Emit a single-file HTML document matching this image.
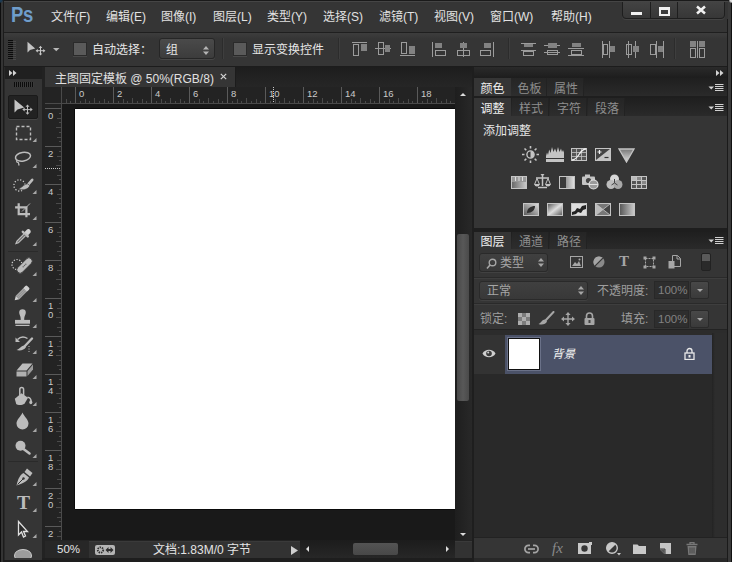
<!DOCTYPE html>
<html lang="zh-CN">
<head>
<meta charset="utf-8">
<title>Photoshop</title>
<style>
html,body{margin:0;padding:0;}
body{width:732px;height:562px;overflow:hidden;background:#353535;position:relative;
 font-family:"Liberation Sans","Noto Sans CJK SC",sans-serif;font-size:12px;color:#dcdcdc;}
.a{position:absolute;}
.t{position:absolute;white-space:nowrap;line-height:1;}
#menubar{left:0;top:0;width:732px;height:32px;background:#353535;}
.mi{position:absolute;top:11px;font-size:12px;color:#e2e2e2;white-space:nowrap;line-height:12px;}
#optbar{left:4px;top:33px;width:724px;height:33px;background:linear-gradient(#3d3d3d 0,#353535 6px);}
#docarea{left:45px;top:67px;width:427px;height:490px;background:#282828;}
#canvasbg{left:62px;top:103px;width:393px;height:437px;background:#191919;}
#canvas{left:75px;top:109px;width:380px;height:400px;background:#ffffff;box-shadow:0 1px 0 #0a0a0a,0 -1px 0 #0a0a0a,-1px 0 0 #0a0a0a;}
#toolbox{left:5px;top:67px;width:37px;height:495px;background:#353535;}
#rpanel{left:474px;top:67px;width:258px;height:495px;background:#282828;}
.cb{width:14px;height:14px;background:#5a5a5a;border:1px solid #2a2a2a;box-sizing:border-box;box-shadow:0 1px 0 #484848;}
.dd{background:linear-gradient(#4a4a4a,#3c3c3c);border:1px solid #262626;border-radius:3px;box-sizing:border-box;box-shadow:0 1px 0 #474747;}
.sep{width:1px;height:21px;background:#2c2c2c;box-shadow:1px 0 0 #3e3e3e;}
.rn{font-size:9.5px;color:#cacaca;}
.tabrow{left:474px;width:253px;height:18px;background:linear-gradient(#1f1f1f,#2a2a2a);}
.tabon{height:18px;overflow:hidden;background:#353535;color:#f0f0f0;font-size:12px;line-height:22px;text-align:center;white-space:nowrap;}
.taboff{height:18px;overflow:hidden;padding-left:2px;background:linear-gradient(#252525,#2d2d2d);color:#8e8e8e;font-size:12px;line-height:22px;text-align:center;white-space:nowrap;border-right:1px solid #222;box-sizing:border-box;}
.fld{width:35px;height:18px;background:#2e2e2e;border:1px solid #282828;box-sizing:border-box;}
.btn{width:19px;height:18px;background:linear-gradient(#484848,#3a3a3a);border:1px solid #2a2a2a;border-radius:2px;box-sizing:border-box;}
.dd2{background:linear-gradient(#404040,#383838);border:1px solid #2a2a2a;border-radius:3px;box-sizing:border-box;box-shadow:0 1px 0 #414141;}
</style>
</head>
<body>
<!-- MENUBAR -->
<div id="menubar" class="a">
 <div class="t" style="left:11px;top:4px;font-size:22px;font-weight:bold;color:#6f9dcb;letter-spacing:-0.5px;transform:scaleX(0.84);transform-origin:0 0;">Ps</div>
 <div class="mi" style="left:51px;">文件(F)</div>
 <div class="mi" style="left:106px;">编辑(E)</div>
 <div class="mi" style="left:161px;">图像(I)</div>
 <div class="mi" style="left:213px;">图层(L)</div>
 <div class="mi" style="left:267px;">类型(Y)</div>
 <div class="mi" style="left:323px;">选择(S)</div>
 <div class="mi" style="left:379px;">滤镜(T)</div>
 <div class="mi" style="left:434px;">视图(V)</div>
 <div class="mi" style="left:490px;">窗口(W)</div>
 <div class="mi" style="left:551px;">帮助(H)</div>
 <!-- window controls -->
 <div class="a" style="left:622px;top:-2px;width:103px;height:21px;background:linear-gradient(#454545,#373737);border:1px solid #1e1e1e;border-radius:0 0 4px 4px;box-sizing:border-box;box-shadow:0 1px 0 #444;"></div>
 <div class="a" style="left:650px;top:0;width:1px;height:19px;background:#1e1e1e;"></div>
 <div class="a" style="left:677px;top:0;width:1px;height:19px;background:#1e1e1e;"></div>
 <div class="a" style="left:631px;top:12px;width:11px;height:3px;background:#f0f0f0;"></div>
 <div class="a" style="left:659px;top:7px;width:11px;height:9px;border:2px solid #f0f0f0;border-top-width:3px;box-sizing:border-box;"></div>
 <svg class="a" style="left:695px;top:5px;" width="12" height="10" viewBox="0 0 12 10"><path d="M2 1.500 L10 8.500 M10 1.500 L2 8.500" stroke="#f2f2f2" stroke-width="2.500" fill="none"/></svg>
</div>
<div class="a" style="left:0;top:32px;width:732px;height:1px;background:#1f1f1f;"></div>
<!-- OPTIONS BAR -->
<div id="optbar" class="a">
 <!-- grip -->
 <div class="a" style="left:4px;top:7px;width:5px;height:20px;background:repeating-linear-gradient(to bottom,#0c0c0c 0 1px,#3a3a3a 1px 2px);"></div><div class="a" style="left:9px;top:7px;width:3px;height:20px;background:repeating-linear-gradient(to bottom,#353535 0 1px,#484848 1px 2px);"></div>
 <!-- move tool icon -->
 <svg class="a" style="left:20px;top:6px;" width="26" height="18" viewBox="20 6 26 18"><path d="M23.500 8.800 L23.500 19.600 L26 17 L31.200 15.600 Z" fill="#c4c4c4"/><path d="M36.500 14 V21.500 M32.800 17.700 H40.200" stroke="#c8c8c8" stroke-width="1" fill="none"/><path d="M36.500 12.800 l-1.800 2.200 h3.600 Z M36.500 22.600 l-1.800 -2.200 h3.600 Z M31.600 17.700 l2.200 -1.800 v3.600 Z M41.400 17.700 l-2.200 -1.800 v3.600 Z" fill="#c8c8c8"/></svg>
 <svg class="a" style="left:49px;top:15px;" width="7" height="4" viewBox="0 0 7 4"><path d="M0 0 H6.500 L3.250 3.300 Z" fill="#b8b8b8"/></svg>
 <div class="a cb" style="left:69px;top:9px;"></div>
 <div class="t" style="left:88px;top:11px;font-size:12px;color:#e6e6e6;">自动选择：</div>
 <div class="a dd" style="left:155px;top:5px;width:56px;height:21px;"></div>
 <div class="t" style="left:162px;top:11px;font-size:12px;color:#e6e6e6;">组</div>
 <svg class="a" style="left:199px;top:12.500px;" width="6" height="9" viewBox="0 0 6 9"><path d="M0 3.500 L3 0 L6 3.500 Z M0 5.500 L3 9 L6 5.500 Z" fill="#b4b4b4"/></svg>
 <div class="a sep" style="left:218px;top:5px;"></div>
 <div class="a cb" style="left:229px;top:9px;"></div>
 <div class="t" style="left:248px;top:11px;font-size:12px;color:#e6e6e6;">显示变换控件</div>
 <div class="a sep" style="left:334px;top:5px;"></div>
<svg class="a" style="left:0;top:0;" width="728" height="31" viewBox="4 33 728 31" shape-rendering="crispEdges"><rect x="352" y="42" width="15" height="1" fill="#9c9c9c"/><rect x="353.5" y="44.5" width="5" height="11" fill="none" stroke="#9c9c9c" stroke-width="1"/><rect x="361" y="44" width="6" height="7" fill="#828282"/><rect x="375" y="48" width="16" height="1" fill="#9c9c9c"/><rect x="378.5" y="42.5" width="5" height="12" fill="none" stroke="#9c9c9c" stroke-width="1"/><rect x="385" y="45" width="5" height="7" fill="#828282"/><rect x="400" y="55" width="15" height="1" fill="#9c9c9c"/><rect x="401.5" y="42.5" width="5" height="11" fill="none" stroke="#9c9c9c" stroke-width="1"/><rect x="409" y="46" width="6" height="8" fill="#828282"/><rect x="432" y="42" width="1" height="15" fill="#9c9c9c"/><rect x="435" y="43" width="7" height="5" fill="#828282"/><rect x="435.5" y="50.5" width="10" height="5" fill="none" stroke="#9c9c9c" stroke-width="1"/><rect x="463" y="42" width="1" height="15" fill="#9c9c9c"/><rect x="460" y="43" width="7" height="5" fill="#828282"/><rect x="457.5" y="50.5" width="12" height="5" fill="none" stroke="#9c9c9c" stroke-width="1"/><rect x="493" y="42" width="1" height="15" fill="#9c9c9c"/><rect x="484" y="43" width="7" height="5" fill="#828282"/><rect x="480.5" y="50.5" width="10" height="5" fill="none" stroke="#9c9c9c" stroke-width="1"/><rect x="521" y="43" width="15" height="1" fill="#9c9c9c"/><rect x="524" y="44" width="9" height="3" fill="#828282"/><rect x="521" y="50" width="15" height="1" fill="#9c9c9c"/><rect x="523.5" y="51.5" width="10" height="4" fill="none" stroke="#9c9c9c" stroke-width="1"/><rect x="544" y="45" width="16" height="1" fill="#9c9c9c"/><rect x="548" y="43" width="9" height="5" fill="#828282"/><rect x="544" y="52" width="16" height="1" fill="#9c9c9c"/><rect x="547.5" y="50.5" width="10" height="4" fill="none" stroke="#9c9c9c" stroke-width="1"/><rect x="572" y="43" width="9" height="4" fill="#828282"/><rect x="568" y="48" width="16" height="1" fill="#9c9c9c"/><rect x="571.5" y="50.5" width="10" height="4" fill="none" stroke="#9c9c9c" stroke-width="1"/><rect x="568" y="55" width="16" height="1" fill="#9c9c9c"/><rect x="602" y="41" width="1" height="17" fill="#9c9c9c"/><rect x="603.5" y="44.5" width="4" height="10" fill="none" stroke="#9c9c9c" stroke-width="1"/><rect x="609" y="41" width="1" height="17" fill="#9c9c9c"/><rect x="610" y="46" width="5" height="6" fill="#828282"/><rect x="628" y="41" width="1" height="17" fill="#9c9c9c"/><rect x="626.5" y="44.5" width="5" height="10" fill="none" stroke="#9c9c9c" stroke-width="1"/><rect x="635" y="41" width="1" height="17" fill="#9c9c9c"/><rect x="633" y="46" width="6" height="6" fill="#828282"/><rect x="650.5" y="44.5" width="5" height="10" fill="none" stroke="#9c9c9c" stroke-width="1"/><rect x="656" y="41" width="1" height="17" fill="#9c9c9c"/><rect x="658" y="46" width="5" height="6" fill="#828282"/><rect x="663" y="41" width="1" height="17" fill="#9c9c9c"/><rect x="690" y="41" width="6" height="6" fill="#828282"/><rect x="690.5" y="48.5" width="5" height="9" fill="none" stroke="#9c9c9c" stroke-width="1"/><rect x="697" y="41" width="1" height="17" fill="#9c9c9c"/><rect x="699" y="41" width="6" height="6" fill="#828282"/><rect x="699.5" y="48.5" width="5" height="9" fill="none" stroke="#9c9c9c" stroke-width="1"/></svg><div class="a sep" style="left:504px;top:5px;"></div><div class="a sep" style="left:670px;top:5px;"></div>
</div>
<div class="a" style="left:0;top:66px;width:732px;height:1px;background:#1c1c1c;"></div>
<!-- TOOLBOX -->
<div class="a" style="left:0;top:67px;width:5px;height:495px;background:#282828;"></div>
<div id="toolbox" class="a"></div>
<div class="a" style="left:5px;top:67px;width:37px;height:12px;background:#202020;"></div>
<svg class="a" style="left:9px;top:70px;" width="8" height="6" viewBox="0 0 8 6"><path d="M0 0 L3.500 3 L0 6 Z M4 0 L7.500 3 L4 6 Z" fill="#d4d4d4"/></svg>
<div class="a" style="left:14px;top:82px;width:20px;height:5px;background:repeating-linear-gradient(to right,#0c0c0c 0 1px,#3a3a3a 1px 2px);"></div>
<div class="a" style="left:8px;top:251px;width:30px;height:1px;background:#2a2a2a;"></div>
<div class="a" style="left:8px;top:461px;width:30px;height:1px;background:#2a2a2a;"></div>
<div class="a" style="left:8px;top:95px;width:30px;height:24px;background:#222;border:1px solid #1a1a1a;border-radius:2px;box-sizing:border-box;box-shadow:0 1px 0 #444;"></div>
<svg class="a" style="left:8px;top:94px;" width="30" height="26" viewBox="0 0 30 26"><path d="M6.500 5.500 V18.600 L9.500 15.500 L16.200 13.500 Z" fill="#c4c4c4"/><path d="M19.500 11.500 V19.700 M15.400 15.600 H23.600" stroke="#bcbcbc" stroke-width="1" fill="none"/><path d="M19.500 10.400 l-2 2.400 h4 Z M19.500 20.800 l-2 -2.400 h4 Z M14.300 15.600 l2.400 -2 v4 Z M24.700 15.600 l-2.400 -2 v4 Z" fill="#bcbcbc"/></svg>
<svg class="a" style="left:8px;top:120px;" width="30" height="26" viewBox="0 0 30 26"><rect x="8.5" y="6.5" width="14" height="13" fill="none" stroke="#bcbcbc" stroke-width="1.4" stroke-dasharray="3 2"/><path d="M28.500 18 V22 H24.500 Z" fill="#a8a8a8"/></svg>
<svg class="a" style="left:8px;top:146px;" width="30" height="26" viewBox="0 0 30 26"><ellipse cx="15" cy="10.700" rx="7.600" ry="4.300" transform="rotate(-10 15 10.700)" fill="none" stroke="#bcbcbc" stroke-width="1.500"/><path d="M9.300 14 c-1.200 1 -0.600 2.400 0.600 2.400 c1 0 0.600 1.600 1.200 3" fill="none" stroke="#bcbcbc" stroke-width="1.300"/><path d="M28.500 18 V22 H24.500 Z" fill="#a8a8a8"/></svg>
<svg class="a" style="left:8px;top:172px;" width="30" height="26" viewBox="0 0 30 26"><circle cx="11.500" cy="13.400" r="5.600" fill="none" stroke="#d0d0d0" stroke-width="1.300" stroke-dasharray="1.200 1.730"/><path d="M24.200 7.800 L19 13.800" stroke="#bcbcbc" stroke-width="2.600" stroke-linecap="round"/><path d="M19.800 11.800 c-3.500 0 -5 3.200 -9.300 5.200 c3.500 1.800 9.500 0.800 11.300 -3.200 Z" fill="#bcbcbc" stroke="#353535" stroke-width="0.600"/><path d="M28.500 18 V22 H24.500 Z" fill="#a8a8a8"/></svg>
<svg class="a" style="left:8px;top:198px;" width="30" height="26" viewBox="0 0 30 26"><path d="M10.700 5.300 V16.100 H22 M7.100 9.400 H18.400 V19.200" fill="none" stroke="#bcbcbc" stroke-width="2.200"/><path d="M22 5.500 L14 13.500" stroke="#bcbcbc" stroke-width="0.900"/><path d="M28.500 18 V22 H24.500 Z" fill="#a8a8a8"/></svg>
<svg class="a" style="left:8px;top:224px;" width="30" height="26" viewBox="0 0 30 26"><path d="M19 5.500 c1.500 -1.800 5 1.200 3.400 3.200 l-2.600 2.800 l-3.400 -3.200 Z" fill="#d0d0d0"/><path d="M14.800 7.800 l5 4.600" stroke="#bcbcbc" stroke-width="2.400" stroke-linecap="round"/><path d="M15.800 10.200 L9 17.200 L8 19.600 L10.400 18.800 L17.400 11.800" fill="#6a6a6a" stroke="#bcbcbc" stroke-width="1.200"/><path d="M28.500 18 V22 H24.500 Z" fill="#a8a8a8"/></svg>
<svg class="a" style="left:8px;top:254px;" width="30" height="26" viewBox="0 0 30 26"><circle cx="9" cy="10.500" r="5" fill="none" stroke="#d0d0d0" stroke-width="1.200" stroke-dasharray="1.200 1.600"/><rect x="7" y="8.200" width="19" height="6.600" rx="3.300" transform="rotate(-45 16.500 11.500)" fill="#bcbcbc" stroke="#353535" stroke-width="0.800"/><circle cx="15.200" cy="12.800" r="0.700" fill="#666"/><circle cx="17.800" cy="10.200" r="0.700" fill="#666"/><circle cx="16.500" cy="11.500" r="0.700" fill="#666"/><path d="M28.500 18 V22 H24.500 Z" fill="#a8a8a8"/></svg>
<svg class="a" style="left:8px;top:280px;" width="30" height="26" viewBox="0 0 30 26"><g transform="rotate(-45 14.500 12.500)"><rect x="7.500" y="10" width="14" height="5" fill="#a4a4a4"/><rect x="18" y="10" width="4.500" height="5" rx="1.200" fill="#d0d0d0"/><path d="M7.500 10 L3.500 12.500 L7.500 15 Z" fill="#d0d0d0"/><path d="M7.500 11.700 h11 M7.500 13.400 h11" stroke="#8a8a8a" stroke-width="0.700"/></g><path d="M28.500 18 V22 H24.500 Z" fill="#a8a8a8"/></svg>
<svg class="a" style="left:8px;top:306px;" width="30" height="26" viewBox="0 0 30 26"><path d="M11.200 6.500 a3.300 3.300 0 0 1 6.600 0 c0 2.200 -1.600 3.200 -1.600 7.400 h-3.400 c0 -4.200 -1.600 -5.200 -1.600 -7.400 Z" fill="#bcbcbc"/><rect x="7" y="13.900" width="15" height="3.800" fill="#bcbcbc"/><rect x="7.500" y="18.800" width="14" height="1.200" fill="#bcbcbc"/><path d="M28.500 18 V22 H24.500 Z" fill="#a8a8a8"/></svg>
<svg class="a" style="left:8px;top:332px;" width="30" height="26" viewBox="0 0 30 26"><path d="M9.500 7.500 c3 -3 7 -3 10 -1" fill="none" stroke="#bcbcbc" stroke-width="1.500"/><path d="M7.500 5.500 v4.500 h4.500 Z" fill="#bcbcbc"/><path d="M24 6.500 L15.500 15.500" stroke="#bcbcbc" stroke-width="2.400" stroke-linecap="round"/><path d="M16.500 13.500 c-3 0 -4.500 3 -8 4.500 c3.500 1.200 8 0 9.500 -3 Z" fill="#bcbcbc"/><path d="M21 14 v6" stroke="#bcbcbc" stroke-width="1" stroke-dasharray="1 1.500"/><path d="M28.500 18 V22 H24.500 Z" fill="#a8a8a8"/></svg>
<svg class="a" style="left:8px;top:357px;" width="30" height="26" viewBox="0 0 30 26"><path d="M14.500 6.500 h10 l-6 7 h-10 Z" fill="#bcbcbc"/><path d="M8.500 14.500 h10 v5 h-10 Z" fill="#b0b0b0"/><path d="M19.500 14 l5.500 -6.500 v5 l-5.500 6.500 Z" fill="#9a9a9a"/><path d="M28.500 18 V22 H24.500 Z" fill="#a8a8a8"/></svg>
<svg class="a" style="left:8px;top:384px;" width="30" height="26" viewBox="0 0 30 26"><path d="M6.800 14.800 L13.500 9.200 L20 13.800 L16.500 19.800 C14 21.500 10 21.500 8.200 20 Z" fill="#bcbcbc"/><path d="M11.800 12.500 V5.500 a1.900 1.900 0 0 1 3.800 0 V13" fill="none" stroke="#bcbcbc" stroke-width="1.500"/><path d="M19.500 13.200 c2.500 0.300 3.600 2 3.600 4.300" fill="none" stroke="#bcbcbc" stroke-width="1.400"/><ellipse cx="22.800" cy="18.200" rx="1.500" ry="2" fill="#bcbcbc"/><path d="M28.500 18 V22 H24.500 Z" fill="#a8a8a8"/></svg>
<svg class="a" style="left:8px;top:410px;" width="30" height="26" viewBox="0 0 30 26"><path d="M14.500 2.500 c1.500 4 6 7 6 11 a6 6 0 0 1 -12 0 c0 -4 4.500 -7 6 -11 Z" fill="#bcbcbc"/><path d="M28.500 18 V22 H24.500 Z" fill="#a8a8a8"/></svg>
<svg class="a" style="left:8px;top:436px;" width="30" height="26" viewBox="0 0 30 26"><circle cx="12.500" cy="9.700" r="5" fill="#bcbcbc"/><path d="M15.500 13 L21.500 17.500" stroke="#bcbcbc" stroke-width="2.600" stroke-linecap="round"/><path d="M28.500 18 V22 H24.500 Z" fill="#a8a8a8"/></svg>
<svg class="a" style="left:8px;top:464px;" width="30" height="26" viewBox="0 0 30 26"><path d="M19 4.500 l5.500 4.500 l-2.500 3.500 l-5.500 -4.500 Z" fill="#bcbcbc"/><path d="M15.500 9 l5.500 4.500 c-1 3 -4 5 -12.500 8 c1.500 -7 3.500 -10.500 7 -12.500 Z" fill="#bcbcbc"/><path d="M9.500 20.500 l5.500 -5.500" stroke="#333" stroke-width="1"/><circle cx="15.500" cy="14.500" r="1.200" fill="#333"/><path d="M28.500 18 V22 H24.500 Z" fill="#a8a8a8"/></svg>
<div class="t" style="left:17px;top:493px;font-family:'Liberation Serif',serif;font-weight:bold;font-size:19.500px;color:#bcbcbc;">T</div>
<svg class="a" style="left:8px;top:490px;" width="30" height="26" viewBox="0 0 30 26"><path d="M28.500 18 V22 H24.500 Z" fill="#a8a8a8"/></svg>
<svg class="a" style="left:8px;top:516px;" width="30" height="26" viewBox="0 0 30 26"><path transform="translate(1 0)" d="M9.500 5.500 V19 L12.500 16 L14.500 21 L16.500 20 L14.500 15.500 H18.500 Z" fill="#2a2a2a" stroke="#e0e0e0" stroke-width="1.300" stroke-linejoin="miter"/><path d="M28.500 18 V22 H24.500 Z" fill="#a8a8a8"/></svg>
<div class="a" style="left:14px;top:549px;width:18px;height:9px;overflow:hidden;"><div class="a" style="left:0;top:0;width:18px;height:13px;border-radius:50%;background:#9c9c9c;border:1px solid #cacaca;box-sizing:border-box;"></div></div><div class="a" style="left:4px;top:560px;width:38px;height:2px;background:#1c1c1c;"></div>
<div class="a" style="left:42px;top:67px;width:3px;height:495px;background:#222;"></div>
<!-- DOC AREA -->
<div id="docarea" class="a"></div>
<div class="a" style="left:45px;top:67px;width:427px;height:20px;background:linear-gradient(#1d1d1d,#262626);"></div><div class="a" style="left:45px;top:67px;width:190px;height:20px;background:#353535;border-right:1px solid #1c1c1c;"></div>
<div class="t" style="left:55px;top:73px;font-size:12px;color:#e0e0e0;">主图固定模板 @ 50%(RGB/8)</div>
<svg class="a" style="left:220px;top:73px;" width="7" height="7" viewBox="0 0 7 7"><path d="M0.800 0.800 L6.200 6.200 M6.200 0.800 L0.800 6.200" stroke="#d4d4d4" stroke-width="1.200" fill="none"/></svg>
<div id="canvasbg" class="a"></div>
<div id="canvas" class="a"></div>
<!-- rulers -->
<div class="a" style="left:45px;top:87px;width:410px;height:16px;background:#232323;"></div>
<div class="a" style="left:45px;top:103px;width:16px;height:437px;background:#232323;"></div>
<div class="a" style="left:45px;top:103px;width:410px;height:1px;background:#4a4a4a;"></div>
<div class="a" style="left:61px;top:87px;width:1px;height:453px;background:#4a4a4a;"></div>
<div class="a" style="left:66px;top:99px;width:1px;height:4px;background:#4a4a4a;"></div>
<div class="a" style="left:70px;top:101px;width:1px;height:2px;background:#4a4a4a;"></div>
<div class="a" style="left:75px;top:87px;width:1px;height:16px;background:#5a5a5a;"></div>
<div class="t rn" style="left:79px;top:89px;">0</div>
<div class="a" style="left:80px;top:101px;width:1px;height:2px;background:#4a4a4a;"></div>
<div class="a" style="left:85px;top:99px;width:1px;height:4px;background:#4a4a4a;"></div>
<div class="a" style="left:89px;top:101px;width:1px;height:2px;background:#4a4a4a;"></div>
<div class="a" style="left:94px;top:98px;width:1px;height:5px;background:#4a4a4a;"></div>
<div class="a" style="left:99px;top:101px;width:1px;height:2px;background:#4a4a4a;"></div>
<div class="a" style="left:104px;top:99px;width:1px;height:4px;background:#4a4a4a;"></div>
<div class="a" style="left:108px;top:101px;width:1px;height:2px;background:#4a4a4a;"></div>
<div class="a" style="left:113px;top:87px;width:1px;height:16px;background:#5a5a5a;"></div>
<div class="t rn" style="left:117px;top:89px;">2</div>
<div class="a" style="left:118px;top:101px;width:1px;height:2px;background:#4a4a4a;"></div>
<div class="a" style="left:123px;top:99px;width:1px;height:4px;background:#4a4a4a;"></div>
<div class="a" style="left:127px;top:101px;width:1px;height:2px;background:#4a4a4a;"></div>
<div class="a" style="left:132px;top:98px;width:1px;height:5px;background:#4a4a4a;"></div>
<div class="a" style="left:137px;top:101px;width:1px;height:2px;background:#4a4a4a;"></div>
<div class="a" style="left:142px;top:99px;width:1px;height:4px;background:#4a4a4a;"></div>
<div class="a" style="left:146px;top:101px;width:1px;height:2px;background:#4a4a4a;"></div>
<div class="a" style="left:151px;top:87px;width:1px;height:16px;background:#5a5a5a;"></div>
<div class="t rn" style="left:155px;top:89px;">4</div>
<div class="a" style="left:156px;top:101px;width:1px;height:2px;background:#4a4a4a;"></div>
<div class="a" style="left:161px;top:99px;width:1px;height:4px;background:#4a4a4a;"></div>
<div class="a" style="left:165px;top:101px;width:1px;height:2px;background:#4a4a4a;"></div>
<div class="a" style="left:170px;top:98px;width:1px;height:5px;background:#4a4a4a;"></div>
<div class="a" style="left:175px;top:101px;width:1px;height:2px;background:#4a4a4a;"></div>
<div class="a" style="left:180px;top:99px;width:1px;height:4px;background:#4a4a4a;"></div>
<div class="a" style="left:184px;top:101px;width:1px;height:2px;background:#4a4a4a;"></div>
<div class="a" style="left:189px;top:87px;width:1px;height:16px;background:#5a5a5a;"></div>
<div class="t rn" style="left:193px;top:89px;">6</div>
<div class="a" style="left:194px;top:101px;width:1px;height:2px;background:#4a4a4a;"></div>
<div class="a" style="left:199px;top:99px;width:1px;height:4px;background:#4a4a4a;"></div>
<div class="a" style="left:203px;top:101px;width:1px;height:2px;background:#4a4a4a;"></div>
<div class="a" style="left:208px;top:98px;width:1px;height:5px;background:#4a4a4a;"></div>
<div class="a" style="left:213px;top:101px;width:1px;height:2px;background:#4a4a4a;"></div>
<div class="a" style="left:218px;top:99px;width:1px;height:4px;background:#4a4a4a;"></div>
<div class="a" style="left:222px;top:101px;width:1px;height:2px;background:#4a4a4a;"></div>
<div class="a" style="left:227px;top:87px;width:1px;height:16px;background:#5a5a5a;"></div>
<div class="t rn" style="left:231px;top:89px;">8</div>
<div class="a" style="left:232px;top:101px;width:1px;height:2px;background:#4a4a4a;"></div>
<div class="a" style="left:237px;top:99px;width:1px;height:4px;background:#4a4a4a;"></div>
<div class="a" style="left:241px;top:101px;width:1px;height:2px;background:#4a4a4a;"></div>
<div class="a" style="left:246px;top:98px;width:1px;height:5px;background:#4a4a4a;"></div>
<div class="a" style="left:251px;top:101px;width:1px;height:2px;background:#4a4a4a;"></div>
<div class="a" style="left:256px;top:99px;width:1px;height:4px;background:#4a4a4a;"></div>
<div class="a" style="left:260px;top:101px;width:1px;height:2px;background:#4a4a4a;"></div>
<div class="a" style="left:265px;top:87px;width:1px;height:16px;background:#5a5a5a;"></div>
<div class="t rn" style="left:269px;top:89px;">10</div>
<div class="a" style="left:270px;top:101px;width:1px;height:2px;background:#4a4a4a;"></div>
<div class="a" style="left:275px;top:99px;width:1px;height:4px;background:#4a4a4a;"></div>
<div class="a" style="left:279px;top:101px;width:1px;height:2px;background:#4a4a4a;"></div>
<div class="a" style="left:284px;top:98px;width:1px;height:5px;background:#4a4a4a;"></div>
<div class="a" style="left:289px;top:101px;width:1px;height:2px;background:#4a4a4a;"></div>
<div class="a" style="left:294px;top:99px;width:1px;height:4px;background:#4a4a4a;"></div>
<div class="a" style="left:298px;top:101px;width:1px;height:2px;background:#4a4a4a;"></div>
<div class="a" style="left:303px;top:87px;width:1px;height:16px;background:#5a5a5a;"></div>
<div class="t rn" style="left:307px;top:89px;">12</div>
<div class="a" style="left:308px;top:101px;width:1px;height:2px;background:#4a4a4a;"></div>
<div class="a" style="left:313px;top:99px;width:1px;height:4px;background:#4a4a4a;"></div>
<div class="a" style="left:317px;top:101px;width:1px;height:2px;background:#4a4a4a;"></div>
<div class="a" style="left:322px;top:98px;width:1px;height:5px;background:#4a4a4a;"></div>
<div class="a" style="left:327px;top:101px;width:1px;height:2px;background:#4a4a4a;"></div>
<div class="a" style="left:332px;top:99px;width:1px;height:4px;background:#4a4a4a;"></div>
<div class="a" style="left:336px;top:101px;width:1px;height:2px;background:#4a4a4a;"></div>
<div class="a" style="left:341px;top:87px;width:1px;height:16px;background:#5a5a5a;"></div>
<div class="t rn" style="left:345px;top:89px;">14</div>
<div class="a" style="left:346px;top:101px;width:1px;height:2px;background:#4a4a4a;"></div>
<div class="a" style="left:351px;top:99px;width:1px;height:4px;background:#4a4a4a;"></div>
<div class="a" style="left:355px;top:101px;width:1px;height:2px;background:#4a4a4a;"></div>
<div class="a" style="left:360px;top:98px;width:1px;height:5px;background:#4a4a4a;"></div>
<div class="a" style="left:365px;top:101px;width:1px;height:2px;background:#4a4a4a;"></div>
<div class="a" style="left:370px;top:99px;width:1px;height:4px;background:#4a4a4a;"></div>
<div class="a" style="left:374px;top:101px;width:1px;height:2px;background:#4a4a4a;"></div>
<div class="a" style="left:379px;top:87px;width:1px;height:16px;background:#5a5a5a;"></div>
<div class="t rn" style="left:383px;top:89px;">16</div>
<div class="a" style="left:384px;top:101px;width:1px;height:2px;background:#4a4a4a;"></div>
<div class="a" style="left:389px;top:99px;width:1px;height:4px;background:#4a4a4a;"></div>
<div class="a" style="left:393px;top:101px;width:1px;height:2px;background:#4a4a4a;"></div>
<div class="a" style="left:398px;top:98px;width:1px;height:5px;background:#4a4a4a;"></div>
<div class="a" style="left:403px;top:101px;width:1px;height:2px;background:#4a4a4a;"></div>
<div class="a" style="left:408px;top:99px;width:1px;height:4px;background:#4a4a4a;"></div>
<div class="a" style="left:412px;top:101px;width:1px;height:2px;background:#4a4a4a;"></div>
<div class="a" style="left:417px;top:87px;width:1px;height:16px;background:#5a5a5a;"></div>
<div class="t rn" style="left:421px;top:89px;">18</div>
<div class="a" style="left:422px;top:101px;width:1px;height:2px;background:#4a4a4a;"></div>
<div class="a" style="left:427px;top:99px;width:1px;height:4px;background:#4a4a4a;"></div>
<div class="a" style="left:431px;top:101px;width:1px;height:2px;background:#4a4a4a;"></div>
<div class="a" style="left:436px;top:98px;width:1px;height:5px;background:#4a4a4a;"></div>
<div class="a" style="left:441px;top:101px;width:1px;height:2px;background:#4a4a4a;"></div>
<div class="a" style="left:446px;top:99px;width:1px;height:4px;background:#4a4a4a;"></div>
<div class="a" style="left:450px;top:101px;width:1px;height:2px;background:#4a4a4a;"></div>
<div class="a" style="left:59px;top:103px;width:2px;height:1px;background:#4a4a4a;"></div>
<div class="a" style="left:45px;top:108px;width:16px;height:1px;background:#5a5a5a;"></div>
<div class="t rn" style="left:48px;top:111px;">0</div>
<div class="a" style="left:59px;top:113px;width:2px;height:1px;background:#4a4a4a;"></div>
<div class="a" style="left:57px;top:118px;width:4px;height:1px;background:#4a4a4a;"></div>
<div class="a" style="left:59px;top:122px;width:2px;height:1px;background:#4a4a4a;"></div>
<div class="a" style="left:56px;top:127px;width:5px;height:1px;background:#4a4a4a;"></div>
<div class="a" style="left:59px;top:132px;width:2px;height:1px;background:#4a4a4a;"></div>
<div class="a" style="left:57px;top:137px;width:4px;height:1px;background:#4a4a4a;"></div>
<div class="a" style="left:59px;top:141px;width:2px;height:1px;background:#4a4a4a;"></div>
<div class="a" style="left:45px;top:146px;width:16px;height:1px;background:#5a5a5a;"></div>
<div class="t rn" style="left:48px;top:149px;">2</div>
<div class="a" style="left:59px;top:151px;width:2px;height:1px;background:#4a4a4a;"></div>
<div class="a" style="left:57px;top:156px;width:4px;height:1px;background:#4a4a4a;"></div>
<div class="a" style="left:59px;top:160px;width:2px;height:1px;background:#4a4a4a;"></div>
<div class="a" style="left:56px;top:165px;width:5px;height:1px;background:#4a4a4a;"></div>
<div class="a" style="left:59px;top:170px;width:2px;height:1px;background:#4a4a4a;"></div>
<div class="a" style="left:57px;top:175px;width:4px;height:1px;background:#4a4a4a;"></div>
<div class="a" style="left:59px;top:179px;width:2px;height:1px;background:#4a4a4a;"></div>
<div class="a" style="left:45px;top:184px;width:16px;height:1px;background:#5a5a5a;"></div>
<div class="t rn" style="left:48px;top:187px;">4</div>
<div class="a" style="left:59px;top:189px;width:2px;height:1px;background:#4a4a4a;"></div>
<div class="a" style="left:57px;top:194px;width:4px;height:1px;background:#4a4a4a;"></div>
<div class="a" style="left:59px;top:198px;width:2px;height:1px;background:#4a4a4a;"></div>
<div class="a" style="left:56px;top:203px;width:5px;height:1px;background:#4a4a4a;"></div>
<div class="a" style="left:59px;top:208px;width:2px;height:1px;background:#4a4a4a;"></div>
<div class="a" style="left:57px;top:213px;width:4px;height:1px;background:#4a4a4a;"></div>
<div class="a" style="left:59px;top:217px;width:2px;height:1px;background:#4a4a4a;"></div>
<div class="a" style="left:45px;top:222px;width:16px;height:1px;background:#5a5a5a;"></div>
<div class="t rn" style="left:48px;top:225px;">6</div>
<div class="a" style="left:59px;top:227px;width:2px;height:1px;background:#4a4a4a;"></div>
<div class="a" style="left:57px;top:232px;width:4px;height:1px;background:#4a4a4a;"></div>
<div class="a" style="left:59px;top:236px;width:2px;height:1px;background:#4a4a4a;"></div>
<div class="a" style="left:56px;top:241px;width:5px;height:1px;background:#4a4a4a;"></div>
<div class="a" style="left:59px;top:246px;width:2px;height:1px;background:#4a4a4a;"></div>
<div class="a" style="left:57px;top:251px;width:4px;height:1px;background:#4a4a4a;"></div>
<div class="a" style="left:59px;top:255px;width:2px;height:1px;background:#4a4a4a;"></div>
<div class="a" style="left:45px;top:260px;width:16px;height:1px;background:#5a5a5a;"></div>
<div class="t rn" style="left:48px;top:263px;">8</div>
<div class="a" style="left:59px;top:265px;width:2px;height:1px;background:#4a4a4a;"></div>
<div class="a" style="left:57px;top:270px;width:4px;height:1px;background:#4a4a4a;"></div>
<div class="a" style="left:59px;top:274px;width:2px;height:1px;background:#4a4a4a;"></div>
<div class="a" style="left:56px;top:279px;width:5px;height:1px;background:#4a4a4a;"></div>
<div class="a" style="left:59px;top:284px;width:2px;height:1px;background:#4a4a4a;"></div>
<div class="a" style="left:57px;top:289px;width:4px;height:1px;background:#4a4a4a;"></div>
<div class="a" style="left:59px;top:293px;width:2px;height:1px;background:#4a4a4a;"></div>
<div class="a" style="left:45px;top:298px;width:16px;height:1px;background:#5a5a5a;"></div>
<div class="t rn" style="left:48px;top:301px;">1</div>
<div class="t rn" style="left:48px;top:310px;">0</div>
<div class="a" style="left:59px;top:303px;width:2px;height:1px;background:#4a4a4a;"></div>
<div class="a" style="left:57px;top:308px;width:4px;height:1px;background:#4a4a4a;"></div>
<div class="a" style="left:59px;top:312px;width:2px;height:1px;background:#4a4a4a;"></div>
<div class="a" style="left:56px;top:317px;width:5px;height:1px;background:#4a4a4a;"></div>
<div class="a" style="left:59px;top:322px;width:2px;height:1px;background:#4a4a4a;"></div>
<div class="a" style="left:57px;top:327px;width:4px;height:1px;background:#4a4a4a;"></div>
<div class="a" style="left:59px;top:331px;width:2px;height:1px;background:#4a4a4a;"></div>
<div class="a" style="left:45px;top:336px;width:16px;height:1px;background:#5a5a5a;"></div>
<div class="t rn" style="left:48px;top:339px;">1</div>
<div class="t rn" style="left:48px;top:348px;">2</div>
<div class="a" style="left:59px;top:341px;width:2px;height:1px;background:#4a4a4a;"></div>
<div class="a" style="left:57px;top:346px;width:4px;height:1px;background:#4a4a4a;"></div>
<div class="a" style="left:59px;top:350px;width:2px;height:1px;background:#4a4a4a;"></div>
<div class="a" style="left:56px;top:355px;width:5px;height:1px;background:#4a4a4a;"></div>
<div class="a" style="left:59px;top:360px;width:2px;height:1px;background:#4a4a4a;"></div>
<div class="a" style="left:57px;top:365px;width:4px;height:1px;background:#4a4a4a;"></div>
<div class="a" style="left:59px;top:369px;width:2px;height:1px;background:#4a4a4a;"></div>
<div class="a" style="left:45px;top:374px;width:16px;height:1px;background:#5a5a5a;"></div>
<div class="t rn" style="left:48px;top:377px;">1</div>
<div class="t rn" style="left:48px;top:386px;">4</div>
<div class="a" style="left:59px;top:379px;width:2px;height:1px;background:#4a4a4a;"></div>
<div class="a" style="left:57px;top:384px;width:4px;height:1px;background:#4a4a4a;"></div>
<div class="a" style="left:59px;top:388px;width:2px;height:1px;background:#4a4a4a;"></div>
<div class="a" style="left:56px;top:393px;width:5px;height:1px;background:#4a4a4a;"></div>
<div class="a" style="left:59px;top:398px;width:2px;height:1px;background:#4a4a4a;"></div>
<div class="a" style="left:57px;top:403px;width:4px;height:1px;background:#4a4a4a;"></div>
<div class="a" style="left:59px;top:407px;width:2px;height:1px;background:#4a4a4a;"></div>
<div class="a" style="left:45px;top:412px;width:16px;height:1px;background:#5a5a5a;"></div>
<div class="t rn" style="left:48px;top:415px;">1</div>
<div class="t rn" style="left:48px;top:424px;">6</div>
<div class="a" style="left:59px;top:417px;width:2px;height:1px;background:#4a4a4a;"></div>
<div class="a" style="left:57px;top:422px;width:4px;height:1px;background:#4a4a4a;"></div>
<div class="a" style="left:59px;top:426px;width:2px;height:1px;background:#4a4a4a;"></div>
<div class="a" style="left:56px;top:431px;width:5px;height:1px;background:#4a4a4a;"></div>
<div class="a" style="left:59px;top:436px;width:2px;height:1px;background:#4a4a4a;"></div>
<div class="a" style="left:57px;top:441px;width:4px;height:1px;background:#4a4a4a;"></div>
<div class="a" style="left:59px;top:445px;width:2px;height:1px;background:#4a4a4a;"></div>
<div class="a" style="left:45px;top:450px;width:16px;height:1px;background:#5a5a5a;"></div>
<div class="t rn" style="left:48px;top:453px;">1</div>
<div class="t rn" style="left:48px;top:462px;">8</div>
<div class="a" style="left:59px;top:455px;width:2px;height:1px;background:#4a4a4a;"></div>
<div class="a" style="left:57px;top:460px;width:4px;height:1px;background:#4a4a4a;"></div>
<div class="a" style="left:59px;top:464px;width:2px;height:1px;background:#4a4a4a;"></div>
<div class="a" style="left:56px;top:469px;width:5px;height:1px;background:#4a4a4a;"></div>
<div class="a" style="left:59px;top:474px;width:2px;height:1px;background:#4a4a4a;"></div>
<div class="a" style="left:57px;top:479px;width:4px;height:1px;background:#4a4a4a;"></div>
<div class="a" style="left:59px;top:483px;width:2px;height:1px;background:#4a4a4a;"></div>
<div class="a" style="left:45px;top:488px;width:16px;height:1px;background:#5a5a5a;"></div>
<div class="t rn" style="left:48px;top:491px;">2</div>
<div class="t rn" style="left:48px;top:500px;">0</div>
<div class="a" style="left:59px;top:493px;width:2px;height:1px;background:#4a4a4a;"></div>
<div class="a" style="left:57px;top:498px;width:4px;height:1px;background:#4a4a4a;"></div>
<div class="a" style="left:59px;top:502px;width:2px;height:1px;background:#4a4a4a;"></div>
<div class="a" style="left:56px;top:507px;width:5px;height:1px;background:#4a4a4a;"></div>
<div class="a" style="left:59px;top:512px;width:2px;height:1px;background:#4a4a4a;"></div>
<div class="a" style="left:57px;top:517px;width:4px;height:1px;background:#4a4a4a;"></div>
<div class="a" style="left:59px;top:521px;width:2px;height:1px;background:#4a4a4a;"></div>
<div class="a" style="left:45px;top:526px;width:16px;height:1px;background:#5a5a5a;"></div>
<div class="t rn" style="left:48px;top:529px;">2</div>
<div class="t rn" style="left:48px;top:538px;">2</div>
<div class="a" style="left:59px;top:531px;width:2px;height:1px;background:#4a4a4a;"></div>
<div class="a" style="left:57px;top:536px;width:4px;height:1px;background:#4a4a4a;"></div>
<div class="a" style="left:45px;top:87px;width:16px;height:16px;background:#232323;"></div>
<div class="a" style="left:273px;top:87px;width:1px;height:16px;background:repeating-linear-gradient(to bottom,#c8c8c8 0 1px,transparent 1px 2px);"></div>
<div class="a" style="left:45px;top:168px;width:16px;height:1px;background:repeating-linear-gradient(to right,#c8c8c8 0 1px,transparent 1px 2px);"></div>
<!-- v scrollbar -->
<div class="a" style="left:455px;top:87px;width:17px;height:453px;background:linear-gradient(to right,#1e1e1e,#282828);"></div>
<div class="a" style="left:457px;top:234px;width:12px;height:167px;background:linear-gradient(to right,#484848,#585858 50%,#4a4a4a);border-radius:2px;"></div>
<svg class="a" style="left:460px;top:93px;" width="6" height="3" viewBox="0 0 6 3"><path d="M0 3 L3 0 L6 3 Z" fill="#dcdcdc"/></svg>
<svg class="a" style="left:460px;top:533px;" width="6" height="3" viewBox="0 0 6 3"><path d="M0 0 L3 3 L6 0 Z" fill="#dcdcdc"/></svg>
<!-- status bar -->
<div class="a" style="left:45px;top:540px;width:427px;height:18px;background:#323232;border-top:1px solid #232323;box-shadow:inset 0 1px 0 #3a3a3a;box-sizing:border-box;"></div>
<div class="a" style="left:45px;top:541px;width:44px;height:17px;background:#272727;"></div>
<div class="t" style="left:57px;top:544px;font-size:11.5px;color:#e4e4e4;">50%</div>
<div class="a" style="left:95px;top:545px;width:20px;height:10px;background:#b4b4b4;border-radius:2px;"></div><svg class="a" style="left:95px;top:545px;" width="20" height="10" viewBox="0 0 20 10"><circle cx="5.500" cy="5" r="2.700" fill="none" stroke="#2e2e2e" stroke-width="1.800" stroke-dasharray="1.400 0.900"/><path d="M10.500 5 l3 -3 v2 h2 v-2 l3 3 l-3 3 v-2 h-2 v2 Z" fill="#2e2e2e"/></svg>
<div class="t" style="left:153px;top:544px;font-size:12px;color:#e4e4e4;">文档:1.83M/0 字节</div>
<svg class="a" style="left:291px;top:546px;" width="7" height="9" viewBox="0 0 7 9"><path d="M0 0 L7 4.5 L0 9 Z" fill="#cfcfcf"/></svg>
<!-- h scrollbar -->
<div class="a" style="left:300px;top:540px;width:155px;height:18px;background:linear-gradient(#1c1c1c,#272727);"></div>
<div class="a" style="left:353px;top:543px;width:45px;height:12px;background:linear-gradient(#545454,#484848);border-radius:2px;"></div>
<svg class="a" style="left:306px;top:546px;" width="3" height="6" viewBox="0 0 3 6"><path d="M3 0 L0 3 L3 6 Z" fill="#dcdcdc"/></svg>
<svg class="a" style="left:446px;top:546px;" width="3" height="6" viewBox="0 0 3 6"><path d="M0 0 L3 3 L0 6 Z" fill="#dcdcdc"/></svg>
<div class="a" style="left:42px;top:558px;width:686px;height:4px;background:#1e1e1e;"></div>
<!-- RIGHT PANELS -->
<div class="a" style="left:472px;top:67px;width:2px;height:495px;background:#1e1e1e;"></div>
<div id="rpanel" class="a"></div>
<div class="a" style="left:474px;top:67px;width:253px;height:11px;background:linear-gradient(#2a2a2a,#1d1d1d);"></div>
<svg class="a" style="left:716px;top:70px;" width="8" height="6" viewBox="0 0 8 6"><path d="M0 0 L3.500 3 L0 6 Z M4 0 L7.500 3 L4 6 Z" fill="#d4d4d4"/></svg>
<!-- tab row 1 -->
<div class="a tabrow" style="top:78px;"></div>
<div class="a tabon" style="left:474px;top:78px;width:37px;">颜色</div>
<div class="a taboff" style="left:511px;top:78px;width:36px;">色板</div>
<div class="a taboff" style="left:547px;top:78px;width:37px;">属性</div>
<svg class="a" style="left:708px;top:84px;" width="16" height="8" viewBox="0 0 16 8"><path d="M0.500 2.500 h5.500 l-2.750 3 Z" fill="#d0d0d0"/><path d="M7 0.500 h8.500 M7 2.500 h8.500 M7 4.500 h8.500 M7 6.500 h8.500" stroke="#d0d0d0" stroke-width="1"/></svg>
<div class="a" style="left:474px;top:96px;width:253px;height:2px;background:#1e1e1e;"></div>
<!-- tab row 2 -->
<div class="a tabrow" style="top:98px;"></div>
<div class="a tabon" style="left:474px;top:98px;width:37px;">调整</div>
<div class="a taboff" style="left:512px;top:98px;width:37px;">样式</div>
<div class="a taboff" style="left:550px;top:98px;width:37px;">字符</div>
<div class="a taboff" style="left:588px;top:98px;width:37px;">段落</div>
<svg class="a" style="left:708px;top:104px;" width="16" height="8" viewBox="0 0 16 8"><path d="M0.500 2.500 h5.500 l-2.750 3 Z" fill="#d0d0d0"/><path d="M7 0.500 h8.500 M7 2.500 h8.500 M7 4.500 h8.500 M7 6.500 h8.500" stroke="#d0d0d0" stroke-width="1"/></svg>
<div class="a" style="left:474px;top:116px;width:253px;height:112px;background:#353535;"></div>
<div class="t" style="left:483px;top:125px;font-size:12px;color:#e6e6e6;">添加调整</div>
<svg class="a" style="left:522px;top:146px;" width="17" height="17" viewBox="0 0 17 17"><circle cx="8.500" cy="8.500" r="3.600" fill="none" stroke="#c4c4c4" stroke-width="1.400"/><path d="M8.500 5 a3.500 3.500 0 0 1 0 7 Z" fill="#c4c4c4"/><path d="M8.500 0 v2.500 M8.500 14.500 v2.500 M0 8.500 h2.500 M14.500 8.500 h2.500 M2.500 2.500 l1.800 1.800 M12.700 12.700 l1.800 1.800 M14.500 2.500 l-1.800 1.800 M4.300 12.700 l-1.800 1.800" stroke="#c4c4c4" stroke-width="1.600"/></svg>
<svg class="a" style="left:546px;top:147px;" width="18" height="15" viewBox="0 0 18 15"><path d="M0 15 V9 l1 -3.500 l1 2.500 l1.200 -5.500 l1.300 3.500 l1.500 -6 l1.500 5 l1.500 -3.500 l1.500 4 l1.500 -5.500 l1.500 5 l1.500 -3.500 l1 3.500 l1 -2 l1 2.500 V15 Z" fill="#c4c4c4"/><path d="M0 11.500 H18" stroke="#353535" stroke-width="1"/></svg>
<svg class="a" style="left:571px;top:148px;" width="16" height="13" viewBox="0 0 16 13"><rect x="0.500" y="0.500" width="15" height="12" fill="#555" stroke="#c4c4c4"/><path d="M0 4.500 H16 M0 8.500 H16 M5.500 0 V13 M10.500 0 V13" stroke="#c4c4c4" stroke-width="0.800"/><path d="M1 12 C8 12 8 1 15 1" fill="none" stroke="#f0f0f0" stroke-width="1.300"/></svg>
<svg class="a" style="left:595px;top:148px;" width="16" height="13" viewBox="0 0 16 13"><rect x="0.500" y="0.500" width="15" height="12" fill="#444" stroke="#c4c4c4"/><path d="M1 12 L15 1 V12 Z" fill="#c4c4c4"/><path d="M2.500 4 h4 M4.500 2 v4" stroke="#eee" stroke-width="1.200"/><path d="M9.500 9.500 h4" stroke="#333" stroke-width="1.200"/></svg>
<svg class="a" style="left:618px;top:148px;" width="17" height="15" viewBox="0 0 17 15"><defs><linearGradient id="gv" x1="0" y1="0" x2="0" y2="1"><stop offset="0" stop-color="#777"/><stop offset="1" stop-color="#ddd"/></linearGradient></defs><path d="M1 1 H16 L8.500 14 Z" fill="url(#gv)" stroke="#c4c4c4" stroke-width="1.300"/></svg>
<svg class="a" style="left:511px;top:176px;" width="16" height="13" viewBox="0 0 16 13"><defs><linearGradient id="g1" x1="0" y1="0" x2="1" y2="0"><stop offset="0" stop-color="#666"/><stop offset="1" stop-color="#ccc"/></linearGradient></defs><rect x="0.500" y="0.500" width="15" height="12" fill="url(#g1)" stroke="#c4c4c4"/><rect x="1" y="1" width="14" height="5" fill="#999"/><path d="M4.500 1 v4 M8 1 v4 M11.500 1 v4" stroke="#ddd" stroke-width="1"/></svg>
<svg class="a" style="left:534px;top:174px;" width="17" height="15" viewBox="0 0 17 15"><path d="M8.500 1 V12 M2 4 H15 M4 13.500 H13" stroke="#c4c4c4" stroke-width="1.500"/><path d="M0.500 10.500 L3 4.500 L5.500 10.500 Z M11.500 10.500 L14 4.500 L16.500 10.500 Z" fill="none" stroke="#c4c4c4" stroke-width="1"/><path d="M0.500 10.500 h5 a2.500 2 0 0 1 -5 0 Z M11.500 10.500 h5 a2.500 2 0 0 1 -5 0 Z" fill="#c4c4c4"/><path d="M6.500 0 h4 l-2 2.500 Z" fill="#c4c4c4"/></svg>
<svg class="a" style="left:559px;top:176px;" width="16" height="13" viewBox="0 0 16 13"><defs><linearGradient id="g2" x1="0" y1="0" x2="1" y2="0"><stop offset="0" stop-color="#999"/><stop offset="1" stop-color="#e0e0e0"/></linearGradient></defs><rect x="0.500" y="0.500" width="15" height="12" fill="#3a3a3a" stroke="#c4c4c4"/><rect x="7" y="1" width="8" height="11" fill="url(#g2)"/></svg>
<svg class="a" style="left:582px;top:174px;" width="17" height="16" viewBox="0 0 17 16"><rect x="0" y="2.500" width="13" height="8.500" rx="1" fill="#c4c4c4"/><rect x="3" y="0.500" width="5" height="3" fill="#c4c4c4"/><circle cx="6.500" cy="6.500" r="2.600" fill="#444"/><circle cx="11.500" cy="10.500" r="4.500" fill="#9a9a9a" stroke="#e0e0e0" stroke-width="1.200"/><path d="M7 10.500 h9" stroke="#e0e0e0" stroke-width="1"/></svg>
<svg class="a" style="left:606px;top:174px;" width="17" height="16" viewBox="0 0 17 16"><circle cx="8.500" cy="5" r="4.500" fill="#d8d8d8"/><circle cx="5" cy="10.500" r="4.500" fill="#bdbdbd"/><circle cx="12" cy="10.500" r="4.500" fill="#a8a8a8"/><path d="M8.500 5 V9 M8.500 9 L5.500 11 M8.500 9 L11.500 11" stroke="#444" stroke-width="1"/></svg>
<svg class="a" style="left:631px;top:176px;" width="16" height="13" viewBox="0 0 16 13"><rect x="0.500" y="0.500" width="15" height="12" fill="#555" stroke="#c4c4c4"/><path d="M0 4.500 H16 M0 8.500 H16 M5.500 0 V13 M10.500 0 V13" stroke="#c4c4c4" stroke-width="1.100"/><rect x="1" y="1" width="4" height="3" fill="#bbb"/><rect x="6" y="1" width="4" height="3" fill="#888"/><rect x="11" y="5" width="4" height="3" fill="#888"/></svg>
<svg class="a" style="left:523px;top:203px;" width="16" height="13" viewBox="0 0 16 13"><defs><linearGradient id="g3" x1="0" y1="1" x2="1" y2="0"><stop offset="0" stop-color="#555"/><stop offset="1" stop-color="#ddd"/></linearGradient></defs><rect x="0.500" y="0.500" width="15" height="12" fill="url(#g3)" stroke="#c4c4c4"/><path d="M4 10 C4 5 8 3 12 3 C12 7 9 10 4 10 Z" fill="#2e2e2e"/></svg>
<svg class="a" style="left:547px;top:203px;" width="16" height="13" viewBox="0 0 16 13"><defs><linearGradient id="g4" x1="0" y1="0" x2="1" y2="1"><stop offset="0" stop-color="#555"/><stop offset="0.500" stop-color="#ddd"/><stop offset="1" stop-color="#555"/></linearGradient></defs><rect x="0.500" y="0.500" width="15" height="12" fill="url(#g4)" stroke="#c4c4c4"/></svg>
<svg class="a" style="left:571px;top:203px;" width="16" height="13" viewBox="0 0 16 13"><rect x="0.500" y="0.500" width="15" height="12" fill="#ddd" stroke="#c4c4c4"/><path d="M1 9 l3 -1 l2 -3 l3 1 l2 -3 l4 -1 v4 l-3 1 l-2 3 l-3 -1 l-2 2 l-4 1 Z" fill="#222"/></svg>
<svg class="a" style="left:595px;top:203px;" width="16" height="13" viewBox="0 0 16 13"><rect x="0.500" y="0.500" width="15" height="12" fill="#777" stroke="#c4c4c4"/><path d="M1 1 L8 6.500 L1 12 Z" fill="#bbb"/><path d="M15 1 L8 6.500 L15 12 Z" fill="#444"/><path d="M1 1 L15 12 M15 1 L1 12" stroke="#c4c4c4" stroke-width="0.800"/></svg>
<svg class="a" style="left:619px;top:203px;" width="16" height="13" viewBox="0 0 16 13"><defs><linearGradient id="g5" x1="0" y1="0" x2="1" y2="0"><stop offset="0" stop-color="#555"/><stop offset="1" stop-color="#ccc"/></linearGradient></defs><rect x="0.500" y="0.500" width="15" height="12" fill="url(#g5)" stroke="#c4c4c4"/></svg>
<div class="a" style="left:474px;top:228px;width:253px;height:4px;background:#1e1e1e;"></div>
<!-- layers -->
<div class="a tabrow" style="top:232px;height:17px;"></div>
<div class="a tabon" style="left:474px;top:232px;width:37px;height:17px;line-height:20px;">图层</div>
<div class="a taboff" style="left:512px;top:232px;width:37px;height:17px;line-height:20px;">通道</div>
<div class="a taboff" style="left:550px;top:232px;width:37px;height:17px;line-height:20px;">路径</div>
<svg class="a" style="left:708px;top:237px;" width="16" height="8" viewBox="0 0 16 8"><path d="M0.500 2.500 h5.500 l-2.750 3 Z" fill="#d0d0d0"/><path d="M7 0.500 h8.500 M7 2.500 h8.500 M7 4.500 h8.500 M7 6.500 h8.500" stroke="#d0d0d0" stroke-width="1"/></svg>
<div class="a" style="left:474px;top:249px;width:253px;height:84px;background:#353535;"></div>
<!-- filter row -->
<div class="a dd2" style="left:479px;top:253px;width:69px;height:19px;"></div>
<svg class="a" style="left:486px;top:258px;" width="11" height="12" viewBox="0 0 11 12"><circle cx="6.500" cy="4.500" r="3.300" fill="none" stroke="#a6a6a6" stroke-width="1.400"/><path d="M4 7 L1 10.500" stroke="#a6a6a6" stroke-width="1.600"/></svg>
<div class="t" style="left:500px;top:257px;font-size:12px;color:#a6a6a6;">类型</div>
<svg class="a" style="left:538px;top:258px;" width="6" height="9" viewBox="0 0 6 9"><path d="M0 3.500 L3 0 L6 3.500 Z M0 5.500 L3 9 L6 5.500 Z" fill="#a6a6a6"/></svg>
<svg class="a" style="left:570px;top:256px;" width="13" height="12" viewBox="0 0 13 12"><rect x="0.500" y="0.500" width="12" height="11" fill="none" stroke="#a6a6a6"/><path d="M2 10 l3 -4 l2 2 l2 -3 l2 5 Z" fill="#a6a6a6"/><circle cx="9.500" cy="3.500" r="1" fill="#a6a6a6"/></svg>
<svg class="a" style="left:593px;top:256px;" width="12" height="12" viewBox="0 0 12 12"><circle cx="6" cy="6" r="5.500" fill="#8a8a8a"/><path d="M6 0.500 a5.500 5.500 0 0 0 -3.900 9.400 L9.900 2.100 A5.500 5.500 0 0 0 6 0.500 Z" fill="#a6a6a6"/><path d="M2.100 9.900 L9.900 2.100" stroke="#353535" stroke-width="1.200"/></svg>
<div class="t" style="left:619px;top:254px;font-family:'Liberation Serif',serif;font-size:15px;font-weight:bold;color:#a6a6a6;">T</div>
<svg class="a" style="left:643px;top:256px;" width="13" height="13" viewBox="0 0 13 13"><rect x="2.500" y="2.500" width="8" height="8" fill="none" stroke="#a6a6a6" stroke-dasharray="2 1"/><rect x="0.500" y="0.500" width="3" height="3" fill="#a6a6a6"/><rect x="9.500" y="0.500" width="3" height="3" fill="#a6a6a6"/><rect x="0.500" y="9.500" width="3" height="3" fill="#a6a6a6"/><rect x="9.500" y="9.500" width="3" height="3" fill="#a6a6a6"/></svg>
<svg class="a" style="left:668px;top:255px;" width="13" height="14" viewBox="0 0 13 14"><path d="M4.500 0.500 h5 l3 3 v8 h-8 Z" fill="none" stroke="#a6a6a6"/><rect x="0.500" y="6" width="6" height="7.500" fill="#a6a6a6"/><path d="M9 0.500 v3.500 h3.500" fill="none" stroke="#a6a6a6"/></svg>
<div class="a" style="left:701px;top:253px;width:10px;height:18px;background:linear-gradient(#5a5a5a 0 45%,#2a2a2a 45%);border:1px solid #222;border-radius:2px;box-sizing:border-box;"></div>
<div class="a" style="left:474px;top:277px;width:253px;height:1px;background:#2a2a2a;"></div>
<div class="a" style="left:474px;top:278px;width:253px;height:1px;background:#3e3e3e;"></div>
<!-- blend row -->
<div class="a dd2" style="left:479px;top:281px;width:109px;height:19px;"></div>
<div class="t" style="left:487px;top:285px;font-size:12px;color:#a6a6a6;">正常</div>
<svg class="a" style="left:578px;top:286px;" width="6" height="9" viewBox="0 0 6 9"><path d="M0 3.500 L3 0 L6 3.500 Z M0 5.500 L3 9 L6 5.500 Z" fill="#a6a6a6"/></svg>
<div class="t" style="left:597px;top:285px;font-size:12px;color:#9e9e9e;">不透明度:</div>
<div class="a fld" style="left:654px;top:281px;"></div>
<div class="t" style="left:658px;top:285px;font-size:11.500px;color:#828282;">100%</div>
<div class="a btn" style="left:690px;top:281px;"></div>
<svg class="a" style="left:697px;top:289px;" width="6" height="3" viewBox="0 0 6 3"><path d="M0 0 H6 L3 3 Z" fill="#a8a8a8"/></svg>
<div class="a" style="left:474px;top:303px;width:253px;height:1px;background:#2a2a2a;"></div>
<div class="a" style="left:474px;top:304px;width:253px;height:1px;background:#3e3e3e;"></div>
<!-- lock row -->
<div class="t" style="left:480px;top:313px;font-size:12px;color:#9e9e9e;">锁定:</div>
<svg class="a" style="left:518px;top:313px;" width="12" height="12" viewBox="0 0 12 12"><rect width="12" height="12" fill="#7c7c7c"/><rect x="0" y="0" width="4" height="4" fill="#aeaeae"/><rect x="8" y="0" width="4" height="4" fill="#aeaeae"/><rect x="4" y="4" width="4" height="4" fill="#aeaeae"/><rect x="0" y="8" width="4" height="4" fill="#aeaeae"/><rect x="8" y="8" width="4" height="4" fill="#aeaeae"/></svg>
<svg class="a" style="left:538px;top:311px;" width="17" height="15" viewBox="0 0 17 15"><path d="M15.500 1 L7.500 9.500" stroke="#a6a6a6" stroke-width="2" stroke-linecap="round"/><path d="M7 8.500 c-3 0 -3.500 3 -6.500 4.500 c3 1.200 7.500 0.500 8.500 -2.500 Z" fill="#a6a6a6"/></svg>
<svg class="a" style="left:561px;top:312px;" width="14" height="14" viewBox="0 0 14 14"><path d="M7 2 V12 M2 7 H12" stroke="#a6a6a6" stroke-width="1.400"/><path d="M7 0 l-2.600 3 h5.200 Z M7 14 l-2.600 -3 h5.200 Z M0 7 l3 -2.600 v5.200 Z M14 7 l-3 -2.600 v5.200 Z" fill="#a6a6a6"/></svg>
<svg class="a" style="left:584px;top:312px;" width="11" height="13" viewBox="0 0 11 13"><path d="M2.500 6 V4 a3 3 0 0 1 6 0 V6" fill="none" stroke="#a6a6a6" stroke-width="1.600"/><rect x="0.500" y="6" width="10" height="7" rx="1" fill="#a6a6a6"/><rect x="4.500" y="8" width="2" height="3" fill="#444"/></svg>
<div class="t" style="left:621px;top:313px;font-size:12px;color:#9e9e9e;">填充:</div>
<div class="a fld" style="left:654px;top:310px;"></div>
<div class="t" style="left:658px;top:314px;font-size:11.500px;color:#828282;">100%</div>
<div class="a btn" style="left:690px;top:310px;"></div>
<svg class="a" style="left:697px;top:318px;" width="6" height="3" viewBox="0 0 6 3"><path d="M0 0 H6 L3 3 Z" fill="#a8a8a8"/></svg>
<div class="a" style="left:474px;top:329px;width:253px;height:1px;background:#232323;"></div><div class="a" style="left:474px;top:330px;width:253px;height:3px;background:#2c2c2c;"></div>
<!-- layer list -->
<div class="a" style="left:474px;top:333px;width:238px;height:204px;background:#292929;"></div><div class="a" style="left:474px;top:333px;width:238px;height:2px;background:#2c2c2c;"></div>
<div class="a" style="left:712px;top:333px;width:15px;height:204px;background:linear-gradient(to right,#232323,#2d2d2d 3px);"></div>
<div class="a" style="left:474px;top:335px;width:31px;height:39px;background:#333333;"></div>
<div class="a" style="left:505px;top:335px;width:207px;height:39px;background:#4b5268;"></div>
<svg class="a" style="left:482px;top:348px;" width="14" height="11" viewBox="0 0 14 11"><path d="M0.500 5.500 C3 0.500 11 0.500 13.500 5.500 C11 10.500 3 10.500 0.500 5.500 Z" fill="#d0d0d0"/><circle cx="7" cy="5.500" r="2.800" fill="#3a3a3a"/><circle cx="6.200" cy="4.600" r="1" fill="#d0d0d0"/></svg>
<div class="a" style="left:508px;top:338px;width:32px;height:32px;background:#fff;border:1px solid #111;box-sizing:border-box;box-shadow:0 0 0 1px #6a7188;"></div>
<div class="t" style="left:552px;top:349px;font-size:11.500px;font-style:italic;color:#f2f2f2;">背景</div>
<svg class="a" style="left:684px;top:347px;" width="11" height="13" viewBox="0 0 11 13"><path d="M3 6 V4 a2.500 2.500 0 0 1 5 0 V6" fill="none" stroke="#e8e8e8" stroke-width="1.300"/><rect x="1" y="6" width="9" height="6.500" fill="none" stroke="#e8e8e8" stroke-width="1.300"/><rect x="4.500" y="8" width="2" height="2.500" fill="#e8e8e8"/></svg>
<!-- bottom bar -->
<div class="a" style="left:474px;top:537px;width:253px;height:21px;background:#353535;border-top:1px solid #222;box-sizing:border-box;"></div>
<svg class="a" style="left:524px;top:544px;" width="15" height="10" viewBox="0 0 15 10"><rect x="0.900" y="1.400" width="13.200" height="7.200" rx="3.600" fill="none" stroke="#a4a4a4" stroke-width="1.700"/><rect x="6" y="0" width="3" height="10" fill="#353535"/><path d="M4 5 H11" stroke="#a4a4a4" stroke-width="1.700"/></svg>
<div class="t" style="left:552px;top:541px;font-family:'Liberation Serif',serif;font-size:15px;font-style:italic;color:#8a8a8a;">fx</div>
<svg class="a" style="left:578px;top:542px;" width="15" height="12" viewBox="0 0 15 12"><rect x="0" y="1" width="13" height="11" fill="#c8c8c8"/><circle cx="6.500" cy="6.500" r="3.200" fill="#353535"/><rect x="11" y="0" width="3" height="3" fill="#c8c8c8"/></svg>
<svg class="a" style="left:606px;top:542px;" width="16" height="14" viewBox="0 0 16 14"><circle cx="6" cy="6" r="5.300" fill="none" stroke="#c8c8c8" stroke-width="1.400"/><path d="M2.200 9.800 A5.300 5.300 0 0 1 9.800 2.200 Z" fill="#c8c8c8"/><path d="M11 11 h4 l-2 2.500 Z" fill="#c8c8c8"/></svg>
<svg class="a" style="left:633px;top:543px;" width="13" height="11" viewBox="0 0 13 11"><path d="M0 1.500 h4.500 l1.500 1.500 h7 v8 h-13 Z" fill="#c8c8c8"/></svg>
<svg class="a" style="left:660px;top:543px;" width="11" height="11" viewBox="0 0 11 11"><path d="M0 0 h11 v11 h-6.500 l-4.500 -4.500 Z" fill="#c4c4c4"/><path d="M0 6.500 h4.500 v4.500 Z" fill="#555"/><path d="M0 6 h5 v5" fill="none" stroke="#353535" stroke-width="1"/></svg>
<svg class="a" style="left:686px;top:542px;" width="12" height="13" viewBox="0 0 12 13"><path d="M0.500 2.500 h11 M4 2 v-1.500 h4 v1.500" fill="none" stroke="#777" stroke-width="1.300"/><path d="M1.500 4 h9 l-0.800 9 h-7.400 Z" fill="#777"/><path d="M4 5.500 v6 M6 5.500 v6 M8 5.500 v6" stroke="#353535" stroke-width="0.800"/></svg>

<!-- FRAME -->
<div class="a" style="left:0;top:0;width:1px;height:562px;background:#0e0e0e;"></div>
<div class="a" style="left:1px;top:0;width:2px;height:562px;background:#343434;"></div>
<div class="a" style="left:3px;top:0;width:1px;height:562px;background:#1c1c1c;"></div>
<div class="a" style="left:727px;top:19px;width:1px;height:543px;background:#1a1a1a;"></div>
<div class="a" style="left:728px;top:0;width:3px;height:562px;background:#3a3a3a;"></div>
<div class="a" style="left:731px;top:0;width:1px;height:562px;background:#111;"></div>
<div class="a" style="left:0;top:0;width:732px;height:1px;background:#1a1a1a;"></div>
<div class="a" style="left:4px;top:1px;width:724px;height:1px;background:#454545;"></div>
<div class="a" style="left:729px;top:0;width:3px;height:3px;background:radial-gradient(circle at 100% 0,#e0e0e0 0,#e0e0e0 40%,rgba(224,224,224,0) 85%);"></div>
<div class="a" style="left:0;top:0;width:3px;height:3px;background:radial-gradient(circle at 0 0,#1c3a52 0,#1c3a52 40%,rgba(28,58,82,0) 85%);"></div>
</body>
</html>
